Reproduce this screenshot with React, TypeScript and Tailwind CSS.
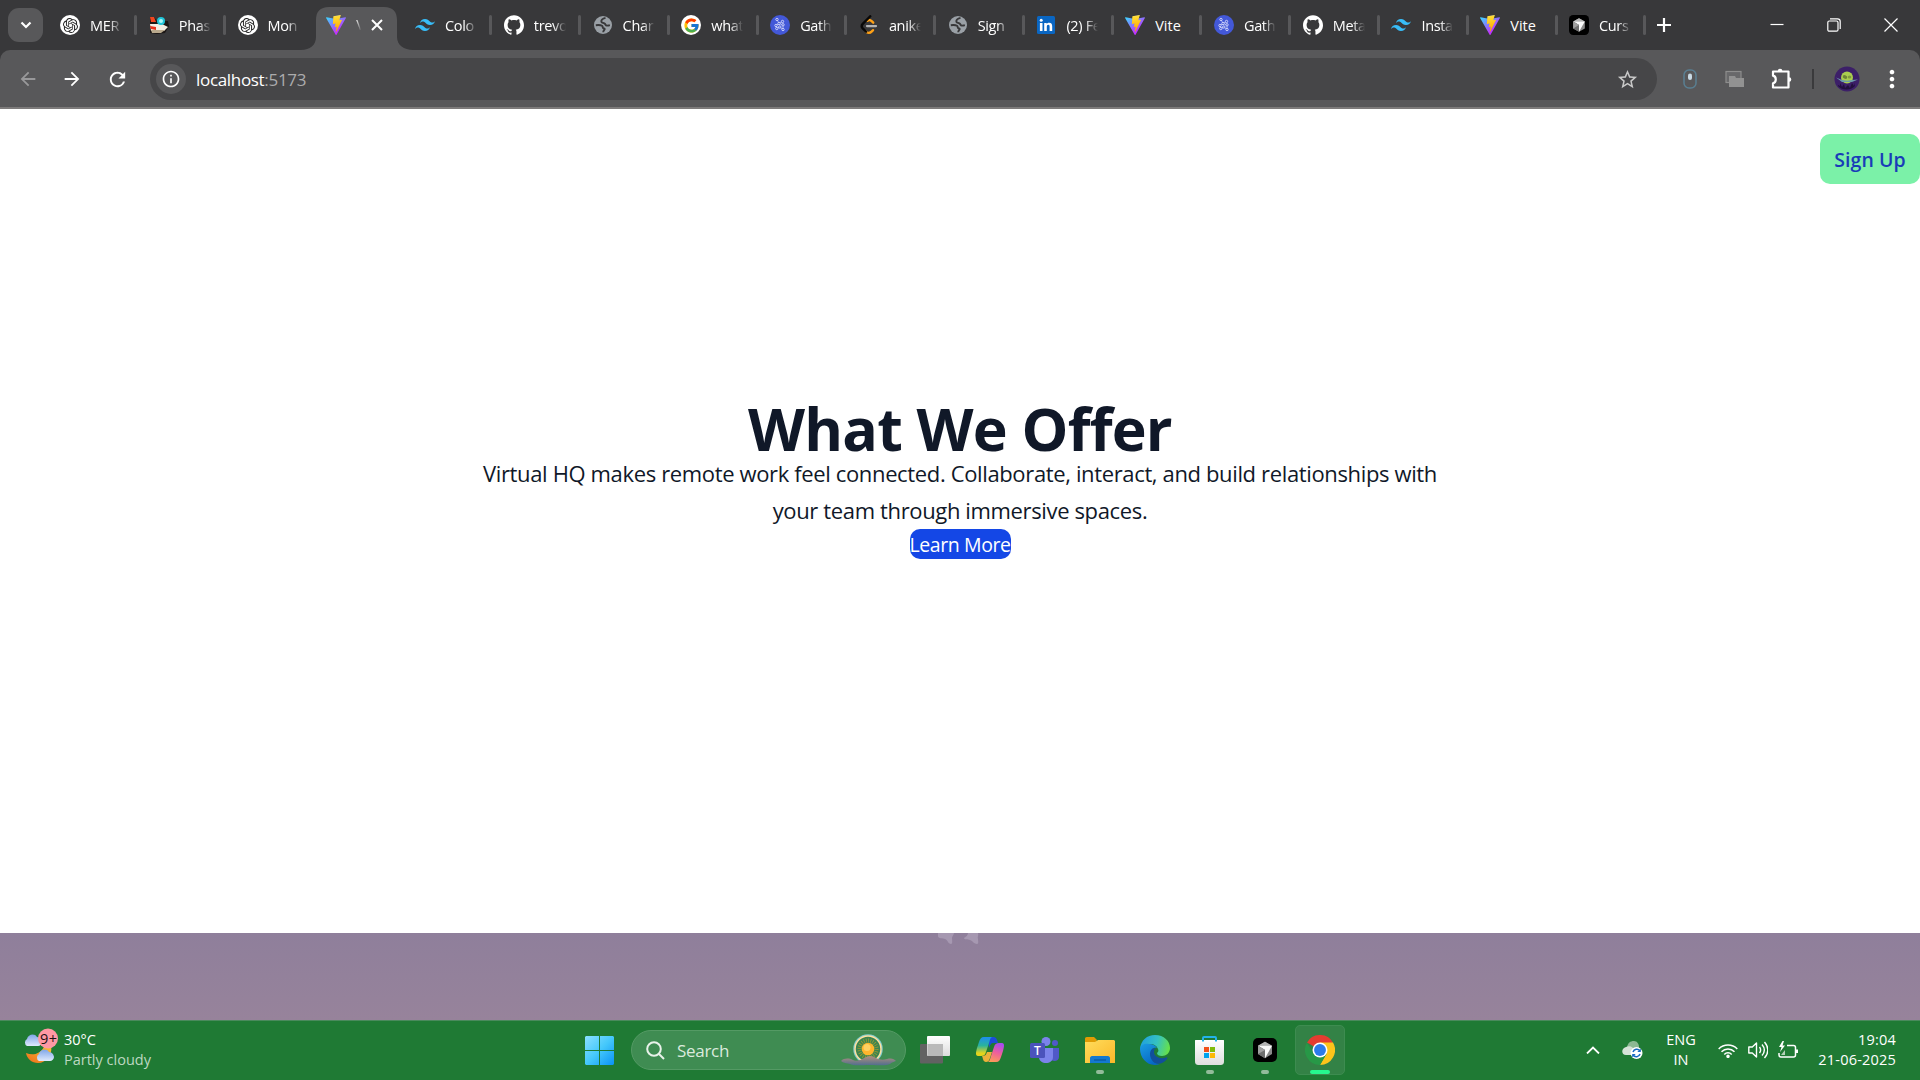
import React from "react";
import { SiGithub, SiOpenai, SiTailwindcss } from "react-icons/si";
import { FcGoogle } from "react-icons/fc";
import { MdArrowBack, MdArrowForward, MdRefresh, MdInfoOutline, MdStarBorder, MdMoreVert } from "react-icons/md";

function ViteIcon() {
  return (
    <svg viewBox="0 0 256 257" className="h-5 w-5">
      <defs>
        <linearGradient id="va" x1="0" x2="0.58" y1="0.08" y2="0.79">
          <stop offset="0" stopColor="#41D1FF" />
          <stop offset="1" stopColor="#BD34FE" />
        </linearGradient>
        <linearGradient id="vb" x1="0.43" x2="0.5" y1="0.02" y2="0.89">
          <stop offset="0" stopColor="#FFEA83" />
          <stop offset="0.08" stopColor="#FFDD35" />
          <stop offset="1" stopColor="#FFA800" />
        </linearGradient>
      </defs>
      <path fill="url(#va)" d="M255.153 37.938L134.897 252.976c-2.483 4.44-8.862 4.466-11.382.048L.875 37.958c-2.746-4.814 1.371-10.646 6.827-9.67l120.385 21.517a6.537 6.537 0 0 0 2.322-.004l117.867-21.483c5.438-.991 9.574 4.796 6.877 9.62Z" />
      <path fill="url(#vb)" d="M185.432.063L96.44 17.501a3.268 3.268 0 0 0-2.634 3.014l-5.474 92.456a3.268 3.268 0 0 0 3.997 3.378l24.777-5.718c2.318-.535 4.413 1.507 3.936 3.838l-7.361 36.047c-.495 2.426 1.782 4.5 4.151 3.78l15.304-4.649c2.372-.72 4.652 1.36 4.15 3.788l-11.698 56.621c-.732 3.542 3.979 5.473 5.943 2.437l1.313-2.028l72.516-144.72c1.215-2.423-.88-5.186-3.54-4.672l-25.505 4.922c-2.396.462-4.435-1.77-3.759-4.114l16.646-57.705c.677-2.35-1.37-4.583-3.769-4.113Z" />
    </svg>
  );
}

function OpenAiIcon() {
  return (
    <span className="flex h-5 w-5 items-center justify-center rounded-full bg-white">
      <SiOpenai className="h-[15px] w-[15px] text-[#222]" />
    </span>
  );
}

function RocketIcon() {
  return (
    <svg viewBox="0 0 20 20" className="h-5 w-5">
      <path d="M1 2h4l3 4h11l1 5-4 7-8 1-7-1z" fill="#1c1715" />
      <path d="M1 2h4l2 5H2z" fill="#f0461f" />
      <path d="M1 9h12l6 3-4 4H2z" fill="#f4efe4" />
      <path d="M2 15h14l-4 3H3z" fill="#b8a88c" />
      <path d="M1 11l6 1v3l-5-1z" fill="#e8321c" />
      <circle cx="12" cy="6" r="4" fill="#1fc4d8" />
      <circle cx="12" cy="6" r="2" fill="#a9f6f8" />
    </svg>
  );
}

function GlobeIcon() {
  return (
    <svg viewBox="0 0 20 20" className="h-5 w-5">
      <circle cx="10" cy="10" r="9" fill="#9aa0a6" />
      <path d="M12.500 2.800C10.500 3.300 8.300 4.500 8.300 6.200c0 1.800 1.500 1.400 3 2.200 1.300.8 1.200 2 2.400 2.200 1.200.2 2-.4 3.300-.2" fill="none" stroke="#38383a" strokeWidth="1.900" />
      <path d="M2.800 10.200c2.500-.3 5-.2 6.200.6 1.200.9.300 2.200 1.600 2.500 1.200.2 1.500.8.600 1.700-.8.800-1 1.300-1 2.300" fill="none" stroke="#38383a" strokeWidth="1.900" />
    </svg>
  );
}

function GoogleIcon() {
  return (
    <span className="flex h-5 w-5 items-center justify-center rounded-full bg-white">
      <FcGoogle className="h-[17px] w-[17px]" />
    </span>
  );
}

function GatherIcon() {
  const dots = [[7, 4.5], [12.500, 6.500], [9, 8.500], [13, 9.800], [6, 10.500], [9.800, 12], [13, 14.500], [6.800, 13.500]];
  return (
    <svg viewBox="0 0 20 20" className="h-5 w-5">
      <circle cx="10" cy="10" r="10" fill="#4358d8" />
      <path d="M7 4.500l2 4 4 1.300M12.500 6.500L9 8.500l-3 2 .8 3 3-1.500 3.200 2.500V9.800" stroke="#c5cdf8" strokeWidth="0.700" fill="none" />
      {dots.map(([x, y]) => (
        <circle key={x + "-" + y} cx={x} cy={y} r="1.200" fill="#4358d8" stroke="#e6e9ff" strokeWidth="0.800" />
      ))}
    </svg>
  );
}

function LeetIcon() {
  return (
    <svg viewBox="0 0 24 24" className="h-5 w-5">
      <path d="M8.300 19.900c1.800 2 5 2 6.800.1l1.800-1.800M10 7c1.600-1.500 3.700-1.200 5.200.3l1.900 1.900" fill="none" stroke="#ffa116" strokeWidth="2.800" strokeLinecap="round" />
      <path d="M13.500 1.500L4.500 10.700c-1.700 1.800-1.700 3.600 0 5.400l4 4" fill="none" stroke="#080808" strokeWidth="2.900" strokeLinecap="round" />
      <path d="M9.500 13.300h11" stroke="#b3b3b3" strokeWidth="2.500" strokeLinecap="round" />
    </svg>
  );
}

function LinkedInIcon() {
  return (
    <svg viewBox="0 0 20 20" className="h-5 w-5">
      <rect x="1" y="1" width="18" height="18" rx="1.500" fill="#0a66c2" />
      <circle cx="5.200" cy="5.200" r="1.500" fill="#fff" />
      <path d="M3.900 7.900h2.600V16H3.900zM8.200 7.900h2.500V9c.5-.8 1.400-1.300 2.500-1.300 2.300 0 3 1.500 3 3.700V16h-2.600v-4.200c0-1.100-.2-2-1.300-2s-1.500.8-1.500 2V16H8.200z" fill="#fff" />
    </svg>
  );
}

function CubeIcon({ className }: { className: string }) {
  return (
    <svg viewBox="0 0 24 24" className={className}>
      <rect width="24" height="24" rx="5" fill="#000" />
      <path d="M12 3.800l7 4v8.300l-7 4.100-7-4.100V7.800z" fill="#8a8a8a" />
      <path d="M12 3.800l7 4H5z" fill="#b4b4b4" />
      <path d="M5 7.800h14l-7 12.400V12z" fill="#fafafa" />
      <path d="M5 7.800L12 12v8.200l-7-4.100z" fill="#6e6e6e" />
      <path d="M5 7.800L12 12l-7 4.100z" fill="#a0a0a0" />
    </svg>
  );
}

const Github = () => <SiGithub className="h-5 w-5 text-white" />;
const Tw = () => <SiTailwindcss className="h-5 w-5 text-[#38bdf8]" />;
const Cursor = () => <CubeIcon className="h-5 w-5" />;

type Tab = { label: string; Icon: () => React.ReactElement };
const tabsBefore: Tab[] = [
  { label: "MER", Icon: OpenAiIcon },
  { label: "Phas", Icon: RocketIcon },
  { label: "Mon", Icon: OpenAiIcon },
];
const tabsAfter: Tab[] = [
  { label: "Colo", Icon: Tw },
  { label: "trevo", Icon: Github },
  { label: "Char", Icon: GlobeIcon },
  { label: "what", Icon: GoogleIcon },
  { label: "Gath", Icon: GatherIcon },
  { label: "anike", Icon: LeetIcon },
  { label: "Sign", Icon: GlobeIcon },
  { label: "(2) Fe", Icon: LinkedInIcon },
  { label: "Vite", Icon: ViteIcon },
  { label: "Gath", Icon: GatherIcon },
  { label: "Meta", Icon: Github },
  { label: "Insta", Icon: Tw },
  { label: "Vite", Icon: ViteIcon },
  { label: "Curs", Icon: Cursor },
];

function TabItem({ tab, last }: { tab: Tab; last?: boolean }) {
  return (
    <div className="flex h-[50px] w-[88.780px] shrink-0 items-center pl-[13px]">
      <tab.Icon />
      <span className={tab.label === "Vite" ? "ml-[10px] w-[32px] overflow-hidden pt-px whitespace-nowrap text-[14.500px] text-white" : "ml-[10px] w-[32px] overflow-hidden pt-px whitespace-nowrap text-[14.500px] tracking-[-0.350px] text-white [mask-image:linear-gradient(to_right,black_60%,transparent_100%)]"}>
        {tab.label}
      </span>
      {!last && <span className="mr-[-1.500px] ml-auto h-5 w-[3px] rounded-full bg-[#58585a]" />}
    </div>
  );
}

function TabStrip() {
  return (
    <div className="flex h-[50px] items-center bg-[#38383a]">
      <div className="ml-2 flex h-[34px] w-[35px] shrink-0 items-center justify-center rounded-[11px] bg-[#58585a]">
        <svg viewBox="0 0 12 8" className="h-2 w-3" fill="none" stroke="#fff" strokeWidth="2.200"><path d="M1.500 1.500L6 6l4.500-4.500" /></svg>
      </div>
      <div className="ml-1 flex">
        {tabsBefore.map((t, i) => <TabItem key={i} tab={t} last={i === 2} />)}
        <div className="relative flex h-[50px] w-[88.780px] shrink-0 items-center">
          <svg viewBox="0 0 112 43" className="absolute bottom-0 left-[-12px] h-[43px] w-[112px]">
            <path d="M0 43c9 0 15-5 15-13V13C15 5 19 0 28 0h55c9 0 13 5 13 13v17c0 8 7 13 16 13z" fill="#58585a" />
          </svg>
          <div className="relative ml-[13px] flex items-center">
            <ViteIcon />
            <span className="ml-[10px] w-[5px] overflow-hidden text-[14.500px] text-white [mask-image:linear-gradient(to_right,black,transparent)]">V</span>
            <svg viewBox="0 0 12 12" className="ml-[10px] h-3 w-3" stroke="#fff" strokeWidth="2"><path d="M1 1l10 10M11 1L1 11" /></svg>
          </div>
        </div>
        {tabsAfter.map((t, i) => <TabItem key={i} tab={t} />)}
      </div>
      <svg viewBox="0 0 14 14" className="ml-[12px] h-[14px] w-[14px] shrink-0" stroke="#fff" strokeWidth="2.200"><path d="M7 0v14M0 7h14" /></svg>
      <div className="ml-auto flex items-center gap-[43px] pr-[22px] text-white">
        <svg viewBox="0 0 14 14" className="h-[14px] w-[14px]" stroke="currentColor" strokeWidth="1.200"><path d="M0.500 6.500h13" /></svg>
        <svg viewBox="0 0 14 14" className="h-[14px] w-[14px]" fill="none" stroke="currentColor" strokeWidth="1.200">
          <rect x="0.800" y="3" width="10.200" height="10.200" rx="1.500" />
          <path d="M3 0.800h7.500c1.700 0 2.700 1 2.700 2.700V11" />
        </svg>
        <svg viewBox="0 0 14 14" className="h-[14px] w-[14px]" stroke="currentColor" strokeWidth="1.200"><path d="M0.500 0.500l13 13M13.500 0.500l-13 13" /></svg>
      </div>
    </div>
  );
}

function Toolbar() {
  return (
    <div className="bg-[#38383a]">
      <div className="flex h-[59px] items-start rounded-t-[10px] border-b-2 border-[#7d7b7b] bg-[#58585a] pt-2">
        <div className="flex h-[42px] w-[150px] shrink-0 items-center text-white">
          <MdArrowBack className="ml-[17px] h-[22px] w-[22px] text-[#98989a]" />
          <MdArrowForward className="ml-[22px] h-[22px] w-[22px]" />
          <MdRefresh className="ml-[23px] h-[23px] w-[23px]" />
        </div>
        <div className="flex h-[42px] w-[1507px] shrink-0 items-center rounded-full bg-[#464648] pl-[6px]">
          <span className="flex h-[30px] w-[30px] items-center justify-center rounded-full bg-[#58585a]">
            <MdInfoOutline className="h-5 w-5 text-white" />
          </span>
          <span className="ml-[10px] pt-px text-[17px] tracking-[-0.320px] text-white">
            localhost<span className="text-[#acacad]">:5173</span>
          </span>
          <MdStarBorder className="mr-[18px] ml-auto h-[23px] w-[23px] text-[#c8c8c8]" />
        </div>
        <div className="flex h-[42px] flex-1 items-center">
          <svg viewBox="0 0 14 20" className="ml-[26px] h-5 w-[14px] shrink-0">
            <rect x="1" y="1" width="12" height="18" rx="5" fill="none" stroke="#5a7f92" strokeWidth="1.500" />
            <rect x="5" y="4.500" width="4" height="6.500" rx="2" fill="#c9dbe6" />
          </svg>
          <svg viewBox="0 0 20 18" className="ml-[28px] h-[18px] w-5 shrink-0">
            <rect x="1" y="1.500" width="15" height="11" fill="#68686a" stroke="#8d8d8d" strokeWidth="1.200" />
            <path d="M4 6h6l1 2h8v9H4z" fill="#929292" />
          </svg>
          <svg viewBox="0 0 22 22" className="ml-[25px] h-[22px] w-[22px] shrink-0">
            <path d="M3 3.500h15.500v16H3v-4.200c3.700-.8 3.700-6.800 0-7.600z" fill="none" stroke="#fff" strokeWidth="2.200" strokeLinejoin="round" />
            <path d="M7.800 3a2.300 2.300 0 0 1 4.600 0zM19 9.200a2.300 2.300 0 0 1 0 4.600z" fill="#fff" />
          </svg>
          <span className="ml-[20px] h-5 w-[2px] bg-[#3a3a3c]" />
          <svg viewBox="0 0 26 26" className="ml-[20px] h-[26px] w-[26px] shrink-0">
            <circle cx="13" cy="13" r="12.500" fill="#3c1f68" />
            <path d="M4 21v-2l2 1v-3l2 4 2-3 1 4 3-3 2 3 2-5 2 3 1-3v3a12 12 0 0 1-17 0z" fill="#22103d" />
            <circle cx="13" cy="11.500" r="6" fill="#a9cd4f" />
            <ellipse cx="11" cy="11" rx="2.300" ry="1.700" fill="#6d8436" transform="rotate(25 11 11)" />
            <ellipse cx="15.500" cy="11" rx="1.800" ry="1.500" fill="#7f9a3e" />
            <path d="M2 11.500l6 2.500 5 .8 5-.8 6-.5-6 2.500H8z" fill="#6c9cab" />
          </svg>
          <MdMoreVert className="ml-[18px] h-[28px] w-[28px] shrink-0 text-white" />
        </div>
      </div>
    </div>
  );
}

function Page() {
  return (
    <main className="flex h-[824px] flex-col bg-white">
      <div className="flex justify-end pt-[25px]">
        <button className="h-[50px] w-[100px] rounded-[10px] bg-[#7bf1a8] pt-[2px] text-[19.500px] font-semibold whitespace-nowrap tracking-[0.050px] text-[#193cb8]">Sign Up</button>
      </div>
      <section className="mt-[212px] flex flex-col items-center text-center text-[#101828]">
        <h1 className="h-[60px] pt-[2px] text-[59px] leading-[60px] font-bold tracking-[-0.780px]">What We Offer</h1>
        <p className="mt-[-1px] w-[980px] text-[22px] leading-[36.560px] tracking-[-0.360px]">
          Virtual HQ makes remote work feel connected. Collaborate, interact, and build relationships with<br />your team through immersive spaces.
        </p>
        <button className="mt-px h-[30px] w-[101px] rounded-[10px] bg-[#1447e6] pt-px text-[19.500px] leading-[30px] whitespace-nowrap tracking-[-0.400px] text-white">Learn More</button>
      </section>
    </main>
  );
}

function Wallpaper() {
  return (
    <div className="flex h-[87px] bg-linear-to-b from-[#8f7f9b] to-[#97839b] pl-[937px]">
      <svg viewBox="0 0 44 12" className="h-3 w-11" fill="#a698b1">
        <path d="M1 0h16c0 2-2 3-2 5s1 6-1 6c-3 0-3-4-6-5-2-1-7 0-7-3zM27 5c2-1 4-3 4-5h10c1 2-1 4 0 6 0 2 1 5-1 5-3 0-4-3-7-4-2-1-6 0-6-2z" />
      </svg>
    </div>
  );
}

function WeatherIcon() {
  return (
    <svg viewBox="0 0 36 38" className="h-[38px] w-[36px] shrink-0">
      <defs>
        <linearGradient id="cl" x1="0" x2="0" y1="0" y2="1"><stop offset="0" stopColor="#7fa6e8" /><stop offset="1" stopColor="#dfeafd" /></linearGradient>
        <linearGradient id="mo" x1="0" x2="1" y1="1" y2="0"><stop offset="0" stopColor="#ee6c1a" /><stop offset="1" stopColor="#fbc335" /></linearGradient>
      </defs>
      <path d="M3 25c7 3 14 1 18-6l7-1c2 9-5 17-13 17-6 0-11-4-12-10z" fill="url(#mo)" />
      <path d="M4 18a4 4 0 0 1 0-7c1-5 8-6 10-2 3 0 5 3 5 5s-2 4-4 4z" fill="url(#cl)" />
      <path d="M16 33a4 4 0 0 1 0-7c1-5 8-6 10-2 3 0 5 3 5 5s-2 4-4 4z" fill="url(#cl)" />
      <circle cx="25" cy="10.500" r="10" fill="#ff99a4" />
      <text x="17" y="16" fontSize="14.500" fill="#1c1114" textLength="17" fontFamily="Open Sans">9+</text>
    </svg>
  );
}

function WindowsLogo() {
  return (
    <svg viewBox="0 0 29 29" className="h-[29px] w-[29px] shrink-0">
      <defs><linearGradient id="wl" gradientUnits="userSpaceOnUse" x1="0" x2="29" y1="0" y2="29"><stop offset="0" stopColor="#8be0ff" /><stop offset="0.500" stopColor="#45c8fb" /><stop offset="1" stopColor="#0a92f5" /></linearGradient></defs>
      <path d="M1 0h13v14H0V1zM15 0h13l1 1v13H15zM0 15h14v14H1l-1-1zM15 15h14v13l-1 1H15z" fill="url(#wl)" />
    </svg>
  );
}

function SearchArt() {
  return (
    <svg viewBox="0 0 56 34" className="h-[34px] w-[56px]">
      <defs><linearGradient id="hill" x1="0" x2="0" y1="0" y2="1"><stop offset="0" stopColor="#b3907d" /><stop offset="1" stopColor="#526f8e" /></linearGradient></defs>
      <circle cx="27" cy="16" r="14" fill="#3a7f4c" stroke="#80cbd0" strokeWidth="1.500" />
      <circle cx="27" cy="16" r="13" fill="#3d8450" stroke="#ffe0a0" strokeWidth="1.500" />
      <circle cx="27" cy="16" r="8.500" fill="none" stroke="#9a9a32" strokeWidth="4" strokeDasharray="0.800 1.420" />
      <circle cx="27" cy="16" r="6.300" fill="#ffb52c" />
      <circle cx="26" cy="14.500" r="3.500" fill="#ffd162" />
      <path d="M0 28c3-3 8-3 12-1 3 2 8 0 13-3 4-2 7-1 10 1 4 2 7 2 11 1 5-1 7 0 9 2-2 1-4 1-6 3-3 2-12 1-20 1-9 0-17 1-20-1-3-1-7-1-9-3z" fill="url(#hill)" />
    </svg>
  );
}

function TaskView() {
  return (
    <svg viewBox="0 0 30 28" className="h-[28px] w-[30px]">
      <defs><linearGradient id="tv" x1="0" x2="0" y1="0" y2="1"><stop offset="0" stopColor="#fff" /><stop offset="1" stopColor="#dcdcdc" /></linearGradient></defs>
      <rect x="0" y="8" width="23" height="19.500" rx="1" fill="#626262" />
      <rect x="7" y="0" width="23" height="20" rx="1" fill="url(#tv)" />
      <path d="M7.500 8H23v12H7.500z" fill="#b9b9b9" />
    </svg>
  );
}

function Copilot() {
  return (
    <svg viewBox="0 0 28 26" className="h-[26px] w-[28px]">
      <defs>
        <linearGradient id="c1" x1="0" x2="0" y1="0" y2="1"><stop offset="0" stopColor="#1c8df0" /><stop offset="0.450" stopColor="#29b39c" /><stop offset="0.850" stopColor="#e4d51c" /></linearGradient>
        <linearGradient id="c2" x1="0.600" x2="0.300" y1="0" y2="1"><stop offset="0" stopColor="#a94bf0" /><stop offset="0.500" stopColor="#f0609a" /><stop offset="1" stopColor="#fc9b58" /></linearGradient>
      </defs>
      <path d="M12 0h6c2 0 3 2 4 6h-5c-2 0-3 2-4 5z" fill="#1c4cd8" />
      <path d="M8 0h8c-2 1-2 3-3 6l-3 9c-1 3-2 4-5 4H2c-3 0-2-4-1-8l2-6c1-3 2-5 5-5z" fill="url(#c1)" />
      <path d="M6 19c3 0 4-1 5-4l5 0-2 6c-1 3-2 4-4 4-3 0-3-4-4-6z" fill="#ecb13a" />
      <path d="M20 25h-8c2-1 2-3 3-6l3-9c1-3 2-4 5-4h3c3 0 2 4 1 8l-2 6c-1 3-2 5-5 5z" fill="url(#c2)" />
    </svg>
  );
}

function Teams() {
  return (
    <svg viewBox="0 0 30 27" className="h-[27px] w-[30px]">
      <circle cx="16" cy="4.500" r="4.500" fill="#7b83eb" />
      <circle cx="25" cy="6" r="3" fill="#5059c9" />
      <path d="M20 11h9v9c0 5-8 5-9 1z" fill="#5059c9" />
      <path d="M9 11h14v9c0 8-14 8-14 0z" fill="#7b83eb" />
      <rect x="0" y="6" width="15" height="15" rx="1.500" fill="#4b53bc" />
      <text x="7.500" y="17.700" textAnchor="middle" fontSize="12" fontWeight="600" fill="#fff" fontFamily="Open Sans">T</text>
    </svg>
  );
}

function Folder() {
  return (
    <svg viewBox="0 0 30 27" className="h-[27px] w-[30px]">
      <defs><linearGradient id="fo" x1="0" x2="1" y1="0" y2="1"><stop offset="0" stopColor="#ffdc5c" /><stop offset="1" stopColor="#fbb829" /></linearGradient></defs>
      <path d="M0 2c0-1 0-2 2-2h7l3 3-2 5H0z" fill="#e09b04" />
      <path d="M0 5h10l3-2h16l1 1v22H0z" fill="url(#fo)" />
      <path d="M5 26v-5c0-1 1-2 2-2h16c1 0 2 1 2 2v5z" fill="#1479cf" />
      <path d="M9 23h12" stroke="#08559b" strokeWidth="1.200" />
    </svg>
  );
}

function Edge() {
  return (
    <svg viewBox="0 0 30 30" className="h-[30px] w-[30px]">
      <defs>
        <linearGradient id="e1" x1="0" x2="1" y1="0.300" y2="0.500"><stop offset="0" stopColor="#1f9fe0" /><stop offset="0.550" stopColor="#35c1c1" /><stop offset="1" stopColor="#66e04a" /></linearGradient>
        <linearGradient id="e2" x1="0" x2="0.600" y1="0" y2="1"><stop offset="0" stopColor="#1b9de2" /><stop offset="1" stopColor="#0667c4" /></linearGradient>
      </defs>
      <path d="M0 14C1 5 7 0 15 0c9 0 15 6 15 13 0 5-4 8-8 8-3 0-5-1-5-3 1-1 2-2 1-4-1-3-4-5-8-5-5 0-9 2-10 5z" fill="url(#e1)" />
      <path d="M0 14c0-4 5-6 9-5 4 0 7 2 8 4-4-1-6 2-6 6 0 6 4 10 9 10-11 4-20-5-20-15z" fill="url(#e2)" />
      <path d="M12.500 13.500C8 17 10 25 15 28c4 2 9 0 12-4 1-1 0-2-1-1.500-6 2-12-1-12-5.500 0-1.500.5-2.500 2-3.500z" fill="#114f9b" />
    </svg>
  );
}

function Store() {
  return (
    <svg viewBox="0 0 29 29" className="h-[29px] w-[29px]">
      <defs><linearGradient id="st" x1="0" x2="0" y1="0" y2="1"><stop offset="0" stopColor="#fff" /><stop offset="1" stopColor="#dedede" /></linearGradient></defs>
      <path d="M0 5c0-1 0-1 1-1h27c1 0 1 0 1 1v20c0 3-1 4-4 4H4c-3 0-4-1-4-4z" fill="url(#st)" />
      <path d="M8 5.500V2c0-1 0-1 1-1h11c1 0 1 0 1 1v3.500" fill="none" stroke="#23b3ea" strokeWidth="2" />
      <path d="M9 11h5v5H9z" fill="#f1511b" /><path d="M15 11h5v5h-5z" fill="#80bb0a" />
      <path d="M9 17h5v5H9z" fill="#00a3ee" /><path d="M15 17h5v5h-5z" fill="#fbb905" />
    </svg>
  );
}

function Chrome() {
  return (
    <svg viewBox="0 0 48 48" className="h-[30px] w-[30px]">
      <path d="M24 24L3.200 12A24 24 0 0 1 44.800 12z" fill="#e53c30" />
      <path d="M24 12h20.800A24 24 0 0 1 24 48l10.400-18z" fill="#fdc41b" />
      <path d="M13.600 30L3.200 12A24 24 0 0 0 24 48l10.400-18z" fill="#279847" />
      <circle cx="24" cy="24" r="12" fill="#fff" />
      <circle cx="24" cy="24" r="9.500" fill="#2d7bea" />
    </svg>
  );
}

function DockItem({ children, state }: { children: React.ReactNode; state?: "open" | "active" }) {
  return (
    <div className="flex h-full w-[54.900px] shrink-0 items-center justify-center">
      <div className={state === "active" ? "relative flex h-[50px] w-[50px] items-center justify-center rounded-[5px] border border-[#3d8c50] bg-[#338246]" : "relative flex h-[50px] w-[50px] items-center justify-center"}>
        {children}
        {state === "open" && <span className="absolute bottom-[1px] left-[21px] h-1 w-2 rounded-full bg-[#92bc9a]" />}
        {state === "active" && <span className="absolute bottom-0 left-[14px] h-1 w-5 rounded-full bg-[#26f78d]" />}
      </div>
    </div>
  );
}

function Taskbar() {
  return (
    <footer className="flex h-[60px] items-center border-t border-[#4a8a5c] bg-[#1f7a34] pb-px text-white">
      <div className="flex w-[572px] shrink-0 items-center pl-[23px]">
        <span className="mb-[6px]"><WeatherIcon /></span>
        <div className="ml-[5px] text-[14.500px] leading-5">
          <div>30°C</div>
          <div className="text-[#bcd8c1]">Partly cloudy</div>
        </div>
      </div>
      <div className="flex w-[59px] pl-[13px]"><WindowsLogo /></div>
      <div className="flex h-10 w-[275px] shrink-0 items-center rounded-full border border-[#549a64] bg-[#3f8c52] pl-[14px]">
        <svg viewBox="0 0 19 19" className="h-[19px] w-[19px]" fill="none" stroke="#e9f2ea" strokeWidth="2"><circle cx="8" cy="8" r="6.800" /><path d="M13 13l5 5" /></svg>
        <span className="ml-[12px] pt-px text-[17px] tracking-[-0.300px] text-[#dbeadd]">Search</span>
        <span className="mr-[8px] ml-auto"><SearchArt /></span>
      </div>
      <div className="ml-[2px] flex h-full">
        <DockItem><TaskView /></DockItem>
        <DockItem><Copilot /></DockItem>
        <DockItem><Teams /></DockItem>
        <DockItem state="open"><Folder /></DockItem>
        <DockItem><Edge /></DockItem>
        <DockItem state="open"><Store /></DockItem>
        <DockItem state="open"><CubeIcon className="h-6 w-6" /></DockItem>
        <DockItem state="active"><Chrome /></DockItem>
      </div>
      <div className="ml-auto flex items-center pr-[24px]">
        <svg viewBox="0 0 14 8" className="h-2 w-[14px]" fill="none" stroke="#fff" strokeWidth="1.800"><path d="M1 7.500l6-6 6 6" /></svg>
        <svg viewBox="0 0 21 18" className="ml-[22px] h-[18px] w-[21px]">
          <path d="M5 6c1-4 3-6 7-6 3 0 5 3 5 6v5H5z" fill="#8cb893" />
          <path d="M4 14c-5 0-5-7 0-8 4-2 7 0 9 4v4z" fill="#d5e2d7" />
          <circle cx="14.500" cy="12" r="6" fill="#fff" />
          <path d="M11 11c1-3 5-4 7-1M18 13c-1 3-5 4-7 1" fill="none" stroke="#1769c2" strokeWidth="1.500" />
          <path d="M18.800 7.500v3.500h-3.500zM10.200 16.500V13h3.500z" fill="#1769c2" />
        </svg>
        <div className="ml-[21px] w-[34px] text-center text-[14.500px] leading-5">ENG<br />IN</div>
        <svg viewBox="0 0 20 15" className="ml-[20px] h-[15px] w-5" fill="none" stroke="#fff" strokeWidth="1.500">
          <path d="M0.700 6a13 13 0 0 1 18.600 0M3.500 8.800a9 9 0 0 1 13 0M6.300 11.500a5 5 0 0 1 7.400 0" /><circle cx="10" cy="13.300" r="1" fill="#fff" />
        </svg>
        <svg viewBox="0 0 20 18" className="ml-[10px] h-[18px] w-5" fill="none" stroke="#fff" strokeWidth="1.400">
          <path d="M0.800 6h3.500L8.500 2v14l-4.200-4H0.800zM11.500 6c1.500 2 1.500 4 0 6M14 3.500c3 3.500 3 7.500 0 11M16.500 1c4.200 5 4.200 11 0 16" strokeLinejoin="round" />
        </svg>
        <svg viewBox="0 0 20 18" className="ml-[10px] h-[18px] w-5">
          <path d="M9 4.500h6.500c1.500 0 2 1 2 2v7.500c0 1.500-1 2-2 2H3c-1.500 0-2-1-2-2V12" fill="none" stroke="#fff" strokeWidth="1.500" />
          <path d="M18 8.500h2v3.500h-2zM4.500 0L1 6h2.500L2 11l5-6.500H4.500L6 0z" fill="#fff" />
          <path d="M3 14l4-5v5z" fill="#b5d0b9" />
        </svg>
        <div className="w-[98px] text-right text-[14.500px] leading-5 whitespace-nowrap tracking-[0.200px]">19:04<br />21-06-2025</div>
      </div>
    </footer>
  );
}

export default function App() {
  return (
    <div className="flex h-[1080px] w-[1920px] flex-col overflow-hidden font-['Open_Sans',sans-serif]">
      <TabStrip />
      <Toolbar />
      <Page />
      <Wallpaper />
      <Taskbar />
    </div>
  );
}
